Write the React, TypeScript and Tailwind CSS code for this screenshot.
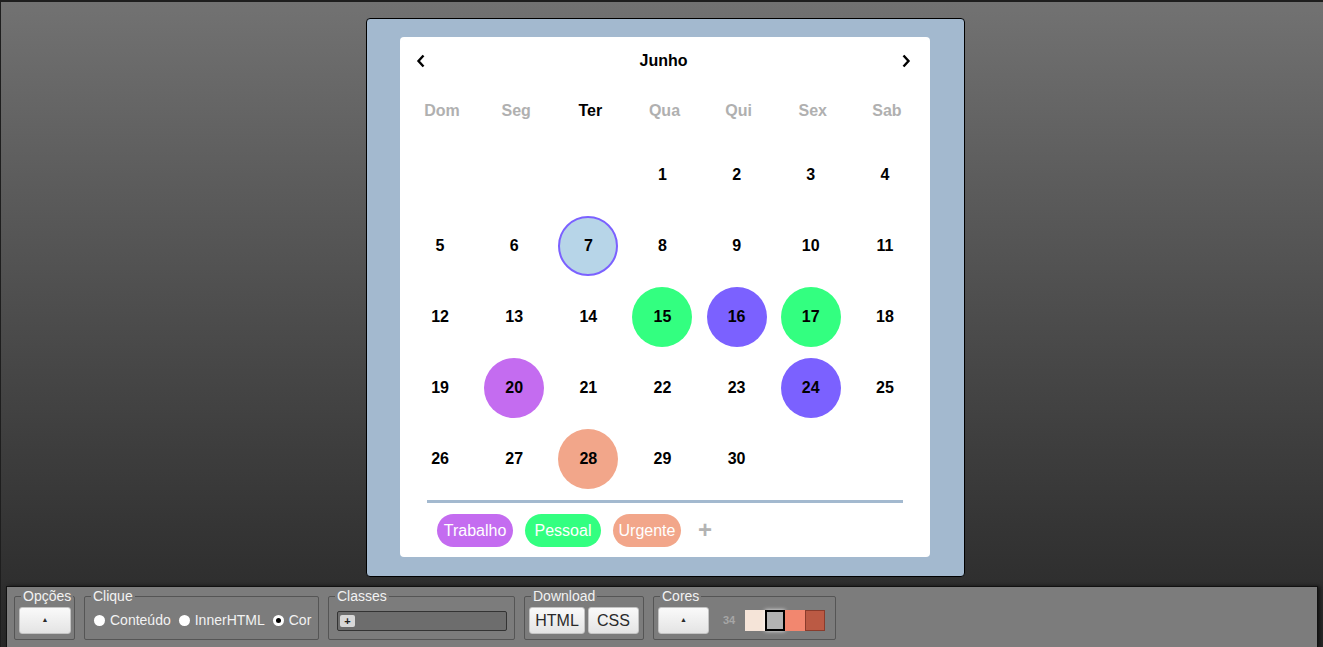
import React from "react";

const weekDays = ["Dom", "Seg", "Ter", "Qua", "Qui", "Sex", "Sab"];

const marks: Record<number, string> = {
  7: "bg-[#b7d5e8] border-2 border-[#7b61ff]",
  15: "bg-[#33ff80]",
  16: "bg-[#7b61ff]",
  17: "bg-[#33ff80]",
  20: "bg-[#c46cf0]",
  24: "bg-[#7b61ff]",
  28: "bg-[#f2a68a]",
};

const tags = [
  { name: "Trabalho", color: "bg-[#c46cf0]", w: "w-[76px]" },
  { name: "Pessoal", color: "bg-[#33ff80]", w: "w-[76px]" },
  { name: "Urgente", color: "bg-[#f2a68a]", w: "w-[68px]" },
];

function buildWeeks() {
  const cells: (number | null)[] = [null, null, null];
  for (let d = 1; d <= 30; d++) cells.push(d);
  while (cells.length % 7 !== 0) cells.push(null);
  const weeks: (number | null)[][] = [];
  for (let i = 0; i < cells.length; i += 7) weeks.push(cells.slice(i, i + 7));
  return weeks;
}

function Chevron({ dir }: { dir: "left" | "right" }) {
  return (
    <svg width="10" height="16" viewBox="0 0 10 16">
      <polyline
        points={dir === "left" ? "7.5,2.5 2.5,8 7.5,13.5" : "2.5,2.5 7.5,8 2.5,13.5"}
        fill="none"
        stroke="#000"
        strokeWidth="2.4"
      />
    </svg>
  );
}

function Calendar() {
  const weeks = buildWeeks();
  return (
    <div className="w-[599px] h-[559px] bg-[#a3b9cf] border border-black rounded-[4px] pl-[33px] pr-[34px] pt-[18px]">
      <div className="w-[530px] h-[520px] bg-white rounded-[4px] flex flex-col">
        <div className="h-[46px] grid grid-cols-[1fr_auto_1fr] items-center pl-[16px] pr-[19px] pt-[2px]">
          <div className="flex justify-start">
            <Chevron dir="left" />
          </div>
          <span className="text-[16px] font-bold text-black">Junho</span>
          <div className="flex justify-end">
            <Chevron dir="right" />
          </div>
        </div>
        <div className="h-[56px] grid grid-cols-7 w-[519px] ml-[5px] items-center">
          {weekDays.map((d) => (
            <div
              key={d}
              className={`text-center text-[16px] font-bold ${d === "Ter" ? "text-black" : "text-[#b0b0b0]"}`}
            >
              {d}
            </div>
          ))}
        </div>
        <div className="w-[519px] ml-[3px]">
          {weeks.map((week, i) => (
            <div key={i} className="grid grid-cols-7 h-[71px]">
              {week.map((day, j) => (
                <div key={j} className="flex items-center justify-center">
                  {day && (
                    <div
                      className={`w-[60px] h-[60px] rounded-full flex items-center justify-center text-[16px] font-bold text-black ${marks[day] ?? ""}`}
                    >
                      {day}
                    </div>
                  )}
                </div>
              ))}
            </div>
          ))}
        </div>
        <div className="mt-[6px] mx-[27px] h-[3px] bg-[#a3b9cf]" />
        <div className="flex items-center gap-[12px] pl-[37px] mt-[11px]">
          {tags.map((t) => (
            <span
              key={t.name}
              className={`h-[33px] rounded-full flex items-center justify-center text-white text-[16px] ${t.w} ${t.color}`}
            >
              {t.name}
            </span>
          ))}
          <span className="text-[#b3b3b3] text-[24px] font-bold leading-none ml-[5px] -mt-[2px]">+</span>
        </div>
      </div>
    </div>
  );
}

function Group({ label, w, children }: { label: string; w: string; children: React.ReactNode }) {
  return (
    <fieldset className={`border border-[#555] rounded-[2px] h-[52px] min-w-0 shrink-0 overflow-hidden ${w}`}>
      <legend className="ml-[6px] px-[2px] text-[14px] leading-[16px] text-[#f2f2f2]">{label}</legend>
      <div className="h-[33px] flex items-center">{children}</div>
    </fieldset>
  );
}

function Btn({ children, w }: { children: React.ReactNode; w: string }) {
  return (
    <button
      className={`${w} h-[27px] rounded-[3px] border border-[#c4c4c4] bg-gradient-to-b from-[#fafafa] to-[#e4e4e4] text-[#2a2a2a] text-[16px] flex items-center justify-center`}
    >
      {children}
    </button>
  );
}

function Radio({ label, checked }: { label: string; checked?: boolean }) {
  return (
    <label className="flex items-center gap-[5px] text-[14px] text-[#f2f2f2] whitespace-nowrap">
      <span className="w-[11px] h-[11px] rounded-full bg-white flex items-center justify-center">
        {checked && <span className="w-[5px] h-[5px] rounded-full bg-black" />}
      </span>
      {label}
    </label>
  );
}

function Toolbar() {
  return (
    <div className="mx-[5px] h-[62px] bg-[#7c7c7c] border border-[#111] shadow-[2px_0_4px_rgba(0,0,0,0.6)] flex gap-[9px] pl-[7px] pt-[1px] text-[14px]">
      <Group label="Opções" w="w-[61px]">
        <div className="pl-[4px]">
          <Btn w="w-[52px]">
            <span className="text-[7px]">▲</span>
          </Btn>
        </div>
      </Group>
      <Group label="Clique" w="w-[235px]">
        <div className="flex items-center gap-[8px] pl-[9px]">
          <Radio label="Conteúdo" />
          <Radio label="InnerHTML" />
          <Radio label="Cor" checked />
        </div>
      </Group>
      <Group label="Classes" w="w-[187px]">
        <div className="w-[170px] h-[20px] ml-[8px] bg-[#6d6d6d] border border-[#333] rounded-[2px] flex items-center pl-[2px]">
          <span className="w-[15px] h-[12px] bg-[#d8d8d8] rounded-[2px] text-[11px] leading-[12px] font-bold text-[#222] text-center">
            +
          </span>
        </div>
      </Group>
      <Group label="Download" w="w-[120px]">
        <div className="flex gap-[3px] pl-[4px]">
          <Btn w="w-[56px]">HTML</Btn>
          <Btn w="w-[51px]">CSS</Btn>
        </div>
      </Group>
      <Group label="Cores" w="w-[183px]">
        <div className="flex items-center pl-[4px]">
          <Btn w="w-[51px]">
            <span className="text-[7px]">▲</span>
          </Btn>
          <span className="ml-[14px] w-[22px] text-[11px] font-bold text-[#a6a6a6]">34</span>
          <div className="flex h-[21px]">
            <span className="w-[20px] bg-[#f5e4d8]" />
            <span className="w-[20px] bg-[#b3b3b3] border-2 border-black shadow-[0_0_4px_rgba(255,255,255,0.9)]" />
            <span className="w-[20px] bg-[#f2876f]" />
            <span className="w-[20px] bg-[#bb5a44] border border-[#8a3c2c]" />
          </div>
        </div>
      </Group>
    </div>
  );
}

export default function App() {
  return (
    <div
      className="h-screen overflow-hidden flex flex-col bg-gradient-to-b from-[#727272] to-[#282828] border-t-2 border-l border-[#1e1e1e]"
      style={{ fontFamily: '"Liberation Sans", Arial, sans-serif' }}
    >
      <div className="flex justify-center pl-[7px] pt-[16px]">
        <Calendar />
      </div>
      <div className="mt-[9px]">
        <Toolbar />
      </div>
    </div>
  );
}
